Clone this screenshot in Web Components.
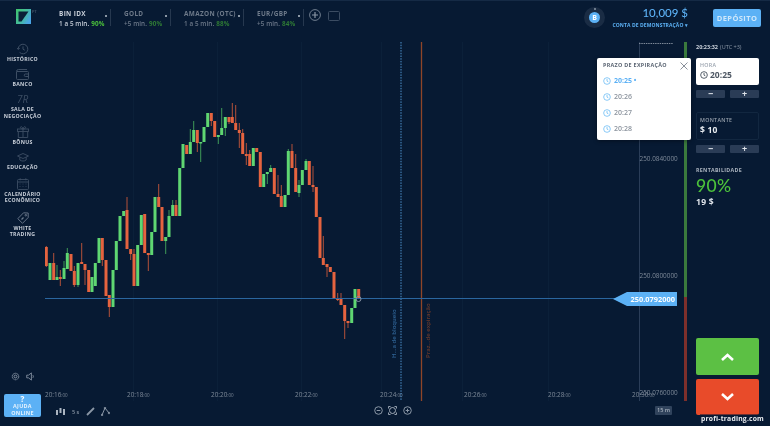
<!DOCTYPE html>
<html lang="pt"><head><meta charset="utf-8"><title>Trading</title>
<style>
html,body{margin:0;height:100%;background:#071a33;overflow:hidden}
body{font-family:"Open Sans","Noto Sans",sans-serif;color:#fff}
</style></head><body>
<x-app></x-app>
<script>
const def=(name,html)=>{customElements.define(name,class extends HTMLElement{
  constructor(){super();this.attachShadow({mode:'open'}).innerHTML=html;}
});};
const clock=(s,c,w=1.2)=>`<svg width="${s}" height="${s}" viewBox="0 0 12 12" fill="none" stroke="${c}" stroke-width="${w}" style="display:block"><circle cx="6" cy="6" r="5"/><path d="M6 3v3.2l2 1"/></svg>`;

def('x-logo',`<style>:host{display:block;width:15px;height:15px}</style>
<svg width="15" height="15" viewBox="0 0 15 15" style="display:block"><defs><linearGradient id="g" x1="0" y1="0" x2="1" y2=".6"><stop offset="0" stop-color="#3fc46c"/><stop offset=".55" stop-color="#45bd9a"/><stop offset="1" stop-color="#4aa5e6"/></linearGradient></defs><rect width="15" height="15" fill="url(#g)"/><path d="M2.500 2.500H12.500L5.500 12.500H2.500z" fill="#0b2038"/></svg>`);

def('x-asset',`<style>
:host{display:flex;align-items:flex-start;position:relative;box-sizing:border-box;height:17px;border-right:1px solid #26384f;padding-top:0}
.n{font:700 6.400px/10px "Open Sans",sans-serif;letter-spacing:.35px;color:var(--n,#c9d0da);white-space:nowrap}
.s{font:600 6.300px/10px "Open Sans",sans-serif;letter-spacing:.1px;color:var(--s,#c9d0da);white-space:nowrap;display:flex;gap:2px}
.p{color:var(--p,#4cc13b);font-weight:700}
.d{position:absolute;right:3px;top:6px;width:2px;height:2px;border-radius:50%;background:#b9c2cc}
</style><div><div class="n"><slot name="n"></slot></div><div class="s"><slot name="s"></slot><span class="p"><slot name="p"></slot></span></div></div><i class="d"></i>`);

def('x-topbar',`<style>
:host{display:flex;align-items:flex-start;height:42px;box-sizing:border-box;padding:8px 9px 0 16px;background:#071a33;border-top:1px solid #152a45}
.pt{font:600 4px/5px "Open Sans",sans-serif;color:#4b5b70;margin:0 0 0 1px;width:27px;align-self:flex-start}
.tabs{display:flex}
x-asset.off{--n:#6e7a8a;--s:#6e7a8a;--p:#2f7a35}
.plus{margin:0 0 0 5px;display:block}
.rect{margin:2px 0 0 7px;display:block}
.acc{margin-left:auto;display:flex;align-items:flex-start}
.coin{width:21px;height:21px;border-radius:50%;background:#1a2c44;display:grid;place-items:center;margin:-2px 7px 0 0;position:relative}
.coin::before{content:"";position:absolute;left:9.500px;top:1px;width:2px;height:2px;border-radius:50%;background:#8a96a5}
.coin b{width:11px;height:11px;border-radius:50%;background:#5cb1f5;font:700 7px/11px "Open Sans",sans-serif;text-align:center;color:#fff}
.bal{text-align:right;width:76px;margin-top:-3px}
.v{font:500 11.500px/14px "Lato",sans-serif;color:#5cb1f5}
.c{font:700 5px/8px "Open Sans",sans-serif;letter-spacing:.1px;color:#5cb1f5;white-space:nowrap;margin-top:1px}
.dep{margin:0 0 0 25px;width:48px;height:18px;background:#5cb1f5;border-radius:2px;font:700 7.500px/18px "Open Sans",sans-serif;letter-spacing:.4px;text-align:center;color:#cfe8fb}
</style>
<x-logo></x-logo><span class="pt">PT</span>
<div class="tabs">
<x-asset style="width:52px"><span slot="n">BIN IDX</span><span slot="s">1 a 5 min.</span><span slot="p">90%</span></x-asset>
<x-asset class="off" style="width:60px;padding-left:13px"><span slot="n">GOLD</span><span slot="s">+5 min.</span><span slot="p">90%</span></x-asset>
<x-asset class="off" style="width:73px;padding-left:13px"><span slot="n">AMAZON (OTC)</span><span slot="s">1 a 5 min.</span><span slot="p">88%</span></x-asset>
<x-asset class="off" style="width:60px;padding-left:13px"><span slot="n">EUR/GBP</span><span slot="s">+5 min.</span><span slot="p">84%</span></x-asset>
</div>
<svg class="plus" width="12" height="12" viewBox="0 0 12 12" fill="none" stroke="#6f7d8e"><circle cx="6" cy="6" r="5.400"/><path d="M6 3v6M3 6h6" stroke="#8a96a5" stroke-width="1.200"/></svg>
<svg class="rect" width="12" height="10" viewBox="0 0 12 10" fill="none" stroke="#3b4c62"><rect x=".5" y=".5" width="11" height="9" rx="1"/></svg>
<div class="acc"><div class="coin"><b>B</b></div><div class="bal"><div class="v">10,009 $</div><div class="c">CONTA DE DEMONSTRAÇÃO ▾</div></div></div>
<div class="dep">DEPÓSITO</div>`);

def('x-nav',`<style>
:host{display:flex;flex-direction:column;align-items:center;width:45px}
.i{height:12px;display:flex;align-items:center;justify-content:center;color:#3d4e64}
.l{font:700 5.200px/6.600px "Open Sans",sans-serif;letter-spacing:.3px;text-align:center;color:#c9d0da;white-space:pre-line;margin-top:1px}
</style><div class="i"><slot name="i"></slot></div><div class="l"><slot></slot></div>`);

def('x-sidebar',`<style>
:host{display:flex;flex-direction:column;width:45px;height:100%;box-sizing:border-box;padding-top:1px}
svg{display:block}
.tools{margin-top:auto;display:flex;gap:6px;padding-left:11px;margin-bottom:13px;align-items:center}
.help{margin:0 0 9px 4px;width:37px;height:23px;background:#5cb1f5;border-radius:2px;text-align:center;font:700 5.400px/6.500px "Open Sans",sans-serif;letter-spacing:.3px;color:#e4f2fd;box-sizing:border-box;padding-top:1px}
.help b{display:block;font:700 8px/8px "Open Sans",sans-serif;color:#fff}
.sr{font:italic 500 10px/12px "Open Sans",sans-serif;color:#3d4e64}
</style>
<x-nav style="margin-bottom:5.500px"><svg slot="i" width="12" height="12" viewBox="0 0 12 12" fill="none" stroke="currentColor"><path d="M1.200 6a4.800 4.800 0 1 1 1.400 3.400M6 3.400v2.800l1.800 1"/><path d="M0 5l1.300 1.500L2.600 5"/></svg>HISTÓRICO</x-nav>
<x-nav style="margin-bottom:5.500px"><svg slot="i" width="13" height="11" viewBox="0 0 13 11" fill="none" stroke="currentColor"><path d="M1 2.500h10.500a1 1 0 0 1 1 1v6a1 1 0 0 1-1 1h-10a1 1 0 0 1-1-1v-7a2 2 0 0 1 2-2h8.500"/><path d="M12.500 5H9.500a1.200 1.200 0 0 0 0 2.500h3"/></svg>BANCO</x-nav>
<x-nav style="margin-bottom:6.500px"><span slot="i" class="sr">7R</span>SALA DE
NEGOCIAÇÃO</x-nav>
<x-nav style="margin-bottom:6px"><svg slot="i" width="12" height="12" viewBox="0 0 12 12" fill="none" stroke="currentColor" stroke-width=".9"><rect x=".5" y="3" width="11" height="2.500"/><path d="M1.300 5.500v6h9.400v-6M6 3v8.500M6 3C4 3 3 2 3.500 1S5.500 .8 6 3c.5-2.200 2-3 2.500-2S8 3 6 3z"/></svg>BÔNUS</x-nav>
<x-nav style="margin-bottom:6.500px"><svg slot="i" width="12" height="11" viewBox="0 0 12 11" fill="none" stroke="currentColor" stroke-width=".9"><path d="M.5 4L6 1.500 11.500 4 6 6.500z"/><path d="M2.800 5.200V8c1.800 1.400 4.600 1.400 6.400 0V5.200"/></svg>EDUCAÇÃO</x-nav>
<x-nav style="margin-bottom:8px"><svg slot="i" width="12" height="12" viewBox="0 0 12 12" fill="none" stroke="currentColor" stroke-width=".9"><rect x=".5" y="1.500" width="11" height="10" rx="1"/><path d="M.5 4h11M3.200 .3v2M8.800 .3v2"/><path d="M2.500 6h1M5.500 6h1M8.500 6h1M2.500 8.500h1M5.500 8.500h1M8.500 8.500h1" stroke-width=".7"/></svg>CALENDÁRIO
ECONÔMICO</x-nav>
<x-nav><svg slot="i" width="12" height="12" viewBox="0 0 12 12" fill="none" stroke="#6e7c8e" stroke-width=".9"><path d="M6.500 .8L11.200 1v4.500L5.500 11.300 .8 6.700z"/><circle cx="8.800" cy="3.200" r=".8"/><path d="M4.500 7.500l2-2" stroke-width="1.200"/></svg>WHITE
TRADING</x-nav>
<div class="tools">
<svg width="9" height="9" viewBox="0 0 10 10" fill="none" stroke="#8491a1" stroke-width="1.100"><circle cx="5" cy="5" r="1.600"/><circle cx="5" cy="5" r="3.600" stroke-dasharray="1.800 .5"/></svg>
<svg width="9" height="9" viewBox="0 0 10 10" fill="none" stroke="#8491a1"><path d="M.8 3.500h2L6 1v8L2.800 6.500h-2z"/><path d="M7.500 3.500c.9 1 .9 2 0 3"/></svg>
</div>
<div class="help"><b>?</b>AJUDA<br>ONLINE</div>`);

const C=[[46.3,0,247,266,246,267],[50,1,263,280],[53.7,0,263,280,253,280],[57,1,277,280,265,280],[60.3,0,277,279,270,286],[64,1,268,279,261,279],[67.3,1,253,269,248,269],[71,0,254,271],[74.3,0,271,285,266,287],[78,1,263,285,263,287],[81.7,0,262,264,243,264],[85,0,264,270,264,285],[88.7,0,270,292],[92,1,277,292],[95.3,1,263,286],[99,1,238,263],[102.3,0,238,260,238,266],[106,0,260,296],[109.3,0,295,307,295,317],[113,1,270,307],[116.3,1,241,270],[120,1,216,241],[123.7,1,211,216],[127,0,210,249,197,249],[130.7,0,249,254,249,260],[134,0,254,286,249,286],[137.7,1,245,286],[141.3,1,215,245],[144.7,0,214,253],[148.3,0,253,255,253,271],[151.7,1,232,255],[155,1,197,232],[158.7,0,197,207,184,207],[162,0,207,241],[165.7,1,237,241,237,254],[169,1,216,237,210,237],[172.7,1,205,216,200,216],[176,0,205,216,200,216],[179.7,1,168,216],[183,1,144,168],[186.7,0,145,154],[190.3,1,142,154,129,154],[193.7,1,130,142,121,142],[197.3,0,130,143,130,152],[200.7,1,142,142,142,162],[204,1,127,142],[207.7,1,113,127],[211.3,0,113,121,113,126],[214.7,0,121,137],[218.3,1,135,137,135,144],[221.7,1,128,135,108,135],[225.3,1,117,128,117,136],[229,0,117,122,117,124],[232.3,0,117,123,103,123],[235.7,0,123,130,105,130],[239.3,0,130,133,123,148],[242.7,0,133,154,129,154],[246.3,0,154,156,143,165],[249.7,0,154,166,150,166],[253.3,1,148,166],[256.7,0,148,152],[260.3,0,152,187],[263.7,1,174,187],[267.3,1,172,174,172,184],[270.7,1,168,172,165,172],[274.3,0,168,194],[278,0,194,197,175,197],[281.3,0,196,207,185,207],[285,1,195,207],[288.3,1,151,195,149,195],[292,0,151,168,144,168],[295.7,0,168,192,154,192],[299,1,185,193,180,197],[302.3,1,170,185],[306,1,161,170,159,170],[309.3,0,161,185],[313,0,185,187,166,192],[316.3,0,187,217],[320,0,217,258],[323.3,0,258,265,236,265],[327,0,264,267,264,277],[330.3,0,267,272],[334,0,272,298],[337.7,0,298,300,293,301],[341,0,299,305,293,305],[344.7,0,305,321,305,339],[348,0,321,323,321,328],[351.7,1,308,323],[355,1,289,308],[358.7,0,289,299]];
const svgCandles=C.map(([x,g,t,b,wt,wb])=>{
  const col=g?'#5fd672':'#e5633f', wc=g?'#3f9a57':'#b4513a';
  let s='';
  if(wt!==undefined)s+=`<rect x="${x-.5}" y="${wt}" width="1" height="${wb-wt}" fill="${wc}"/>`;
  s+=`<rect x="${x-1.5}" y="${t}" width="3" height="${Math.max(b-t,1.5)}" fill="${col}"/>`;
  return s;}).join('');
const grid=[133,217,301,381,462,548].map(x=>`<path d="M${x}.5 42V401" stroke="#0b2039"/>`).join('');
const times=[['20:16',45],['20:18',127],['20:20',211],['20:22',295],['20:24',380],['20:26',464],['20:28',548],['20:30',632]].map(([t,x])=>`<text x="${x}" y="396.500" class="t">${t}<tspan font-size="4.500">:00</tspan></text>`).join('');
const prices=[['250.0840000',161],['250.0800000',278],['250.0760000',394.5]].map(([t,y])=>`<text x="639.500" y="${y}" class="t">${t}</text>`).join('');

def('x-chart',`<style>
:host{display:flex;flex-direction:column;width:651px;height:100%;position:relative}
svg.c{display:block;flex:none}
.t{font:500 6.400px "Open Sans",sans-serif;fill:#7d8998}
.bar{height:25px;display:flex;align-items:center;color:#8b97a6;padding:0 0 5px 10px;box-sizing:border-box;position:relative}
.bar svg{display:block}
.s{font:600 5.500px "Open Sans",sans-serif;color:#8b97a6}
.z{position:absolute;left:328.500px;top:4px;display:flex;gap:5.500px}
.m{position:absolute;left:610px;top:4px;width:17px;height:9px;border-radius:1px;background:#30435c;font:600 5.500px/9px "Open Sans",sans-serif;text-align:center;color:#aab4c0}
</style>
<svg class="c" width="651" height="360" viewBox="45 42 651 360">
${grid}
<path d="M639.500 42V401" stroke="#2a3d58"/>
<path d="M639 43.500H673" stroke="#7d8998" stroke-dasharray="1.500 .8"/>
${prices}${times}
<path d="M401 42V401" stroke="#4f93cf" stroke-dasharray="1.500 1.200"/>
<path d="M421.500 42V401" stroke="#8f4528" stroke-width="1.300"/>
<text transform="translate(396,358) rotate(-90)" font-family="Open Sans" font-size="6" fill="#2f6396" font-weight="600">H...a de bloqueio</text>
<text transform="translate(430,358) rotate(-90)" font-family="Open Sans" font-size="6" fill="#6a3a2b" font-weight="600">Praz...de expiração</text>
${svgCandles}
<path d="M45 298.500H620" stroke="#2a669f"/>
<circle cx="358.500" cy="299" r="2.500" fill="none" stroke="#8793a3"/>
<path d="M613 299L627 292H677V306H627Z" fill="#5cb1f5"/>
<text x="630.500" y="301.800" font-family="Open Sans" font-size="7.400" font-weight="700" fill="#fff">250.0792000</text>
<rect x="684" y="42" width="3" height="255" fill="#3a7a3d"/><rect x="684" y="297" width="3" height="104" fill="#7d2f2b"/>
</svg>
<div class="bar">
<svg width="11" height="9" viewBox="0 0 11 9" fill="#aab4c0"><path d="M1 3h2v5H1zM4.500 1h2v5h-2zM8 2h2v6H8z"/></svg>
<span class="s" style="margin-left:6px">5 s</span>
<svg style="margin-left:7px" width="9" height="9" viewBox="0 0 9 9" fill="none" stroke="#8b97a6" stroke-width="1.800"><path d="M1 8l7-7"/></svg>
<svg style="margin-left:6px" width="9" height="9" viewBox="0 0 9 9" fill="none" stroke="#8b97a6"><path d="M1 8L4 1l4 5"/><circle cx="1" cy="8" r=".8"/><circle cx="4" cy="1" r=".8"/><circle cx="8" cy="6" r=".8"/></svg>
<div class="z">
<svg width="9" height="9" viewBox="0 0 9 9" fill="none" stroke="#8b97a6"><circle cx="4.500" cy="4.500" r="3.800"/><path d="M2.700 4.500h3.600"/></svg>
<svg width="9" height="9" viewBox="0 0 9 9" fill="none" stroke="#a5afbb"><circle cx="4.500" cy="4.500" r="3"/><path d="M.5 2.500v-2h2M6.500 .5h2v2M8.500 6.500v2h-2M2.500 8.500h-2v-2" stroke-width=".9"/></svg>
<svg width="9" height="9" viewBox="0 0 9 9" fill="none" stroke="#8b97a6"><circle cx="4.500" cy="4.500" r="3.800"/><path d="M2.700 4.500h3.600M4.500 2.700v3.600"/></svg>
</div>
<div class="m">15 m</div>
</div>`);

def('x-popup',`<style>
:host{position:absolute;left:597px;top:58px;width:94px;height:82px;background:#fff;border-radius:2px;box-sizing:border-box;padding:3px 6px;box-shadow:0 1px 4px rgba(0,0,0,.4);display:block}
.h{font:700 5.400px/9px "Open Sans",sans-serif;letter-spacing:.3px;color:#5a6472;white-space:nowrap;margin-bottom:2.500px}
.x{position:absolute;right:3px;top:4px}
.r{display:flex;align-items:center;gap:3px;height:16px;font:600 7px/16px "Open Sans",sans-serif;color:#8c949e}
.a{color:#5cb1f5;font-weight:700}
svg{display:block}
</style>
<div class="h">PRAZO DE EXPIRAÇÃO</div>
<svg class="x" width="8" height="8" viewBox="0 0 8 8" stroke="#6b7480" stroke-width=".8"><path d="M.5 .5l7 7M7.500 .5l-7 7"/></svg>
<div class="r a">${clock(8,'#6cbcf5')}20:25 •</div>
<div class="r">${clock(8,'#6cbcf5')}20:26</div>
<div class="r">${clock(8,'#6cbcf5')}20:27</div>
<div class="r">${clock(8,'#6cbcf5')}20:28</div>`);

def('x-stepper',`<style>
:host{display:flex;gap:5px;height:8px}
b{flex:1;background:#2a3c56;border-radius:1px;font:700 9px/8px "Open Sans",sans-serif;color:#dfe4ea;text-align:center}
</style><b>−</b><b>+</b>`);

def('x-panel',`<style>
:host{display:flex;flex-direction:column;box-sizing:border-box;width:74px;height:100%;padding:1px 11px 0 0}
.clk{font:700 5.500px/8px "Open Sans",sans-serif;color:#c9d0da;height:8px;white-space:nowrap}
.clk span{font-weight:500;color:#8c98a7;margin-left:2px}
.box{height:27px;margin-top:7px;background:#fff;border-radius:2px;box-sizing:border-box;padding:3px 4px}
.box.d{height:28px;margin-top:14px;background:transparent;border:1px solid #122740;padding:3px 3px}
.lb{font:600 5.300px/8px "Open Sans",sans-serif;letter-spacing:.3px;color:#9aa3ae}
.val{font:700 8.500px/12px "Open Sans",sans-serif;color:#4c5662;display:flex;align-items:center;gap:2px;white-space:nowrap}
.d .val{color:#e8ecf0;letter-spacing:.2px}
x-stepper{margin-top:5px}
.ren{font:700 5.300px/8px "Open Sans",sans-serif;letter-spacing:.3px;color:#aab3be;margin-top:13px}
.pct{font:500 17.500px/17px "Lato",sans-serif;color:#4cc13b;margin-top:3px;letter-spacing:.3px}
.pay{font:700 8.500px/12px "Open Sans",sans-serif;color:#dfe4ea;margin-top:2px;letter-spacing:.3px}
.btn{width:63px;border-radius:2px;display:grid;place-items:center}
.up{height:37px;margin-top:auto;background:#5cc044}
.dn{height:36px;margin:4px 0 11px;background:#e84b2a}
svg{display:block}
</style>
<div class="clk">20:23:32<span>(UTC +3)</span></div>
<div class="box"><div class="lb">HORA</div><div class="val">${clock(8,'#4c5662',1.4)}20:25</div></div>
<x-stepper></x-stepper>
<div class="box d"><div class="lb">MONTANTE</div><div class="val">$ 10</div></div>
<x-stepper></x-stepper>
<div class="ren">RENTABILIDADE</div>
<div class="pct">90%</div>
<div class="pay">19 $</div>
<div class="btn up"><svg width="13" height="8" viewBox="0 0 13 8" fill="none" stroke="#fff" stroke-width="2.600"><path d="M1 7l5.500-5 5.500 5"/></svg></div>
<div class="btn dn"><svg width="13" height="8" viewBox="0 0 13 8" fill="none" stroke="#fff" stroke-width="2.600"><path d="M1 1l5.500 5 5.500-5"/></svg></div>`);

def('x-mark',`<style>:host{position:absolute;right:5px;bottom:3px;font:700 6.800px/9px "Open Sans",sans-serif;letter-spacing:.2px;color:#e8ecf0;background:rgba(7,26,51,.55);padding:0 1px}</style><slot></slot>`);

def('x-app',`<style>
:host{display:grid;grid-template-columns:45px 651px 74px;grid-template-rows:42px 384px;width:770px;height:426px;background:#071a33;position:relative;overflow:hidden;filter:blur(.35px)}
x-topbar{grid-column:1/4}
</style>
<x-topbar></x-topbar><x-sidebar></x-sidebar><x-chart></x-chart><x-panel></x-panel><x-popup></x-popup><x-mark>profi-trading.com</x-mark>`);
</script></body></html>
